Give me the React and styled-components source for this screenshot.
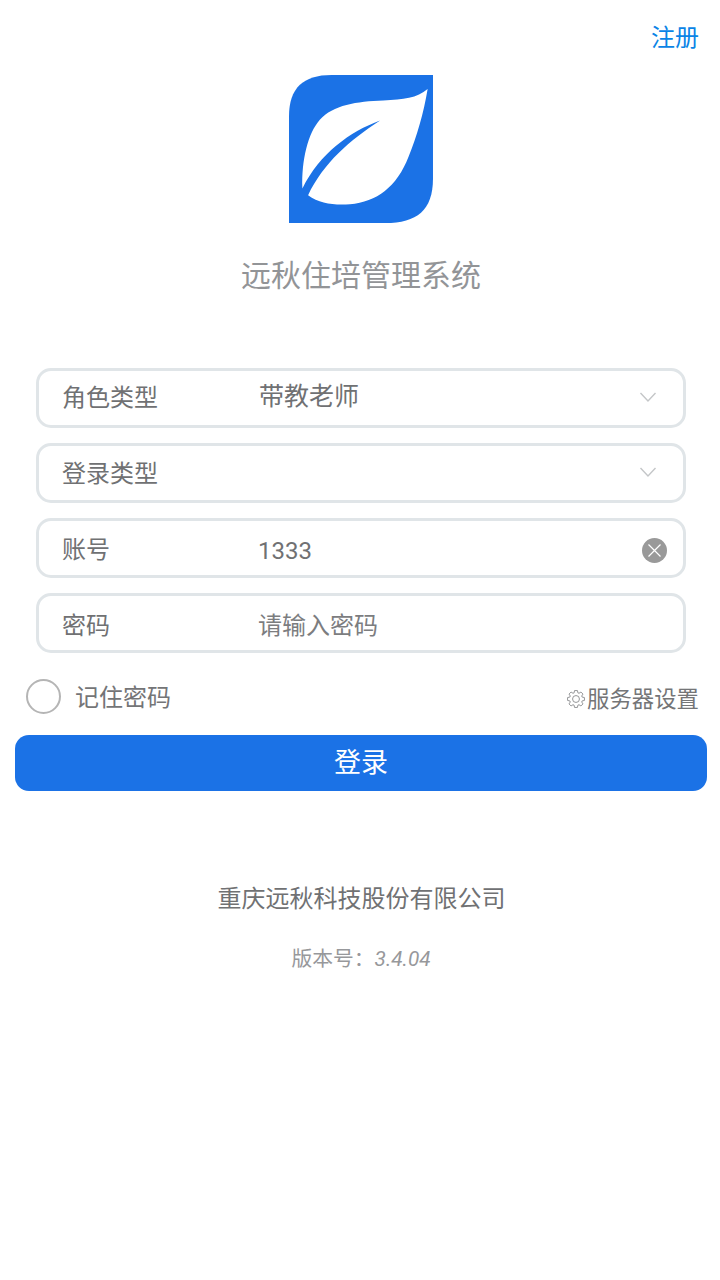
import React from 'react'
import styled, { createGlobalStyle } from 'styled-components'

const GlobalStyle = createGlobalStyle`
  html, body {
    margin: 0;
    padding: 0;
    background: #fff;
  }
  body {
    font-family: Roboto, "Noto Sans CJK SC", sans-serif;
  }
`

const Page = styled.div`
  width: 720px;
  height: 1280px;
  display: flex;
  flex-direction: column;
  overflow: hidden;
  background: #fff;
`

const TopBar = styled.div`
  display: flex;
  justify-content: flex-end;
  padding: 21px 21px 0 0;
  height: 34px;
`

const RegisterLink = styled.a`
  font-size: 24px;
  line-height: 34px;
  color: #0a84e6;
`

const Logo = styled.svg`
  display: block;
  width: 144px;
  height: 148px;
  margin: 20px auto 0 289px;
`

const Title = styled.h1`
  margin: 33px 0 0;
  padding-left: 2px;
  font-size: 30px;
  line-height: 40px;
  font-weight: 400;
  color: #929497;
  text-align: center;
`

const Form = styled.div`
  display: flex;
  flex-direction: column;
  gap: 15px;
  margin: 72px 34px 0 36px;
`

const Field = styled.div`
  box-sizing: border-box;
  height: 60px;
  display: flex;
  align-items: center;
  padding-left: 23px;
  border: 3px solid #e0e5e8;
  border-radius: 15px;
  background: #fff;
`

const Label = styled.span`
  width: 196px;
  flex: none;
  margin-bottom: ${({ $raise }) => $raise || 0}px;
  font-size: 24px;
  color: #707173;
`

const Value = styled.span`
  flex: 1;
  margin-top: ${({ $drop }) => $drop || 0}px;
  margin-bottom: ${({ $raise }) => $raise || 0}px;
  padding-left: ${({ $indent }) => $indent || 0}px;
  font-size: ${({ $size }) => $size || 24}px;
  color: ${({ $muted }) => ($muted ? '#7c7d7f' : '#707173')};
`

const Chevron = styled.svg`
  width: 18px;
  height: 12px;
  margin: 0 26px 2px 0;
  flex: none;
`

const ClearButton = styled.svg`
  width: 25px;
  height: 25px;
  margin: 4px 16px 0 0;
  flex: none;
`

const OptionsRow = styled.div`
  display: flex;
  align-items: center;
  justify-content: space-between;
  height: 36px;
  margin-top: 25px;
  padding: 0 21px 0 26px;
`

const Remember = styled.label`
  display: flex;
  align-items: center;
  gap: 14px;
  font-size: 24px;
  color: #747577;
`

const Circle = styled.span`
  box-sizing: border-box;
  width: 35px;
  height: 35px;
  border: 2px solid #b5b5b5;
  border-radius: 50%;
`

const RememberText = styled.span`
  margin-bottom: 2px;
`

const ServerSetting = styled.div`
  display: flex;
  align-items: center;
  gap: 2px;
  margin-top: 2px;
  font-size: 22.4px;
  color: #747577;
`

const Gear = styled.svg`
  width: 18px;
  height: 18px;
  margin-top: 3px;
  flex: none;
`

const LoginButton = styled.button`
  display: block;
  box-sizing: border-box;
  width: 692px;
  height: 56px;
  margin: 21px 0 0 15px;
  padding: 0 0 6px;
  border: none;
  border-radius: 14px;
  background: #1b72e6;
  color: #fff;
  font-family: inherit;
  font-size: 27px;
`

const Company = styled.div`
  margin-top: 91px;
  padding-left: 3px;
  font-size: 24px;
  line-height: 34px;
  color: #707173;
  text-align: center;
`

const Version = styled.div`
  margin-top: 28px;
  padding-left: 2px;
  font-size: 20.8px;
  line-height: 30px;
  color: #97989b;
  text-align: center;
`

const VersionNumber = styled.i`
  font-style: italic;
`

// outline of an 8 tooth cog, centred on 12,12
const gearPath = () => {
  const points = []
  for (let i = 0; i < 8; i++) {
    const mid = (i * Math.PI) / 4
    const corners = [
      [8.6, mid - 0.3],
      [11.4, mid - 0.17],
      [11.4, mid + 0.17],
      [8.6, mid + 0.3],
    ]
    corners.forEach(([r, a]) => {
      points.push(`${(12 + r * Math.sin(a)).toFixed(2)} ${(12 - r * Math.cos(a)).toFixed(2)}`)
    })
  }
  return `M${points.join(' L')} Z`
}

const ChevronIcon = () => (
  <Chevron viewBox="0 0 18 12" fill="none">
    <path d="M1.5 2 L9 10 L16.5 2" stroke="#c4c6c8" strokeWidth="1.4" />
  </Chevron>
)

const App = () => (
  <Page>
    <GlobalStyle />
    <TopBar>
      <RegisterLink>注册</RegisterLink>
    </TopBar>
    <Logo viewBox="58 46 430 442">
      <path
        d="M58 488 V170 C58 85 100 46 185 46 H488 V355 C488 450 440 488 345 488 Z"
        fill="#1b72e6"
      />
      <path
        d="M472 88 C440 115 400 120 340 122 C260 125 190 135 150 180 C115 220 95 300 98 385 C150 280 240 215 330 182 C240 240 160 310 115 405 C150 430 190 435 240 432 C320 425 380 380 415 290 C440 230 460 160 472 88 Z"
        fill="#fff"
      />
    </Logo>
    <Title>远秋住培管理系统</Title>
    <Form>
      <Field>
        <Label $raise={6}>角色类型</Label>
        <Value $size={25} $raise={8} $indent={1}>带教老师</Value>
        <ChevronIcon />
      </Field>
      <Field>
        <Label $raise={4}>登录类型</Label>
        <Value />
        <ChevronIcon />
      </Field>
      <Field>
        <Label $raise={2}>账号</Label>
        <Value $drop={6}>1333</Value>
        <ClearButton viewBox="0 0 25 25">
          <circle cx="12.5" cy="12.5" r="12.5" fill="#999" />
          <path d="M6.5 6.5 L18.5 18.5 M18.5 6.5 L6.5 18.5" stroke="#fff" strokeWidth="1.2" />
        </ClearButton>
      </Field>
      <Field>
        <Label>密码</Label>
        <Value $muted>请输入密码</Value>
      </Field>
    </Form>
    <OptionsRow>
      <Remember>
        <Circle />
        <RememberText>记住密码</RememberText>
      </Remember>
      <ServerSetting>
        <Gear viewBox="0 0 24 24" fill="none" stroke="#8a8b8d" strokeWidth="1.2" strokeLinejoin="round">
          <path d={gearPath()} />
          <circle cx="12" cy="12" r="4.6" />
        </Gear>
        服务器设置
      </ServerSetting>
    </OptionsRow>
    <LoginButton>登录</LoginButton>
    <Company>重庆远秋科技股份有限公司</Company>
    <Version>
      版本号：<VersionNumber>3.4.04</VersionNumber>
    </Version>
  </Page>
)

export default App
